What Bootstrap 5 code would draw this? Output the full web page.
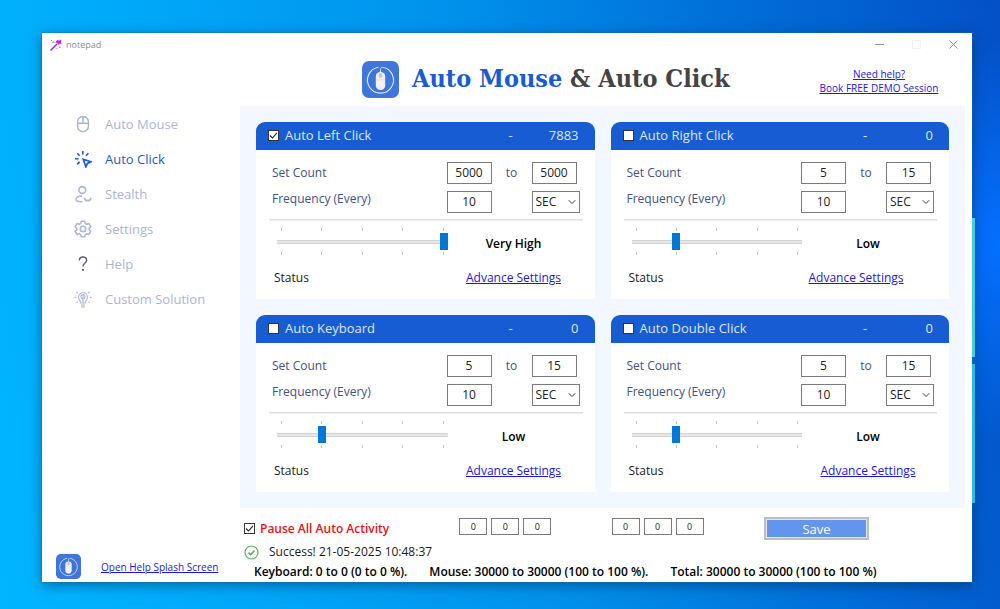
<!DOCTYPE html>
<html lang="en">
<head>
<meta charset="utf-8">
<meta name="viewport" content="width=device-width, initial-scale=1">
<title>Auto Mouse &amp; Auto Click</title>
<link href="https://cdn.jsdelivr.net/npm/bootstrap@5.3.0/dist/css/bootstrap.min.css" rel="stylesheet">
<style>
  :root { --brand: #175cd3; --panel: #f3f7ff; --muted-blue: #a9b5d9; --label: #41508a; --edge: #7a7a7a; }
  body {
    min-height: 100vh; padding: 33px 28px 27px 42px;
    font: 12px/20px "Open Sans", "Noto Sans", sans-serif; color: #1b1b1b;
    background:
      radial-gradient(140px 200px at 100% 40%, #0470ff 0, #0470ff00 100%),
      linear-gradient(80deg, #00b6ff 0%, #00a8fa 22%, #0092ec 50%, #006ed8 76%, #0450c6 100%);
  }
  a { color: #1d14f0; }
  .app-window { background: #fff; min-height: calc(100vh - 60px); box-shadow: 0 0 0 1px #1b6fae66, 0 3px 12px #00204080; }
  .desktop-glow { position: absolute; left: 100%; top: 185px; width: 3px; height: 285px; background: linear-gradient(#45cfd8 0 139px, #0a5fd0 139px 146px, #2fbbe0 146px); }

  .title-bar { height: 23px; padding: 0 12px 0 8px; font-size: 9px; color: #8b8b8b; }
  .title-bar button { width: 13px; height: 13px; padding: 0; border: 0; background: none; display: flex; }
  .brand-bar { display: grid; grid-template-columns: 1fr 186px; align-items: center; height: 50px; padding-left: 320px; }
  .brand-title { gap: 13px; padding-bottom: 4px; }
  .brand-bar h1 { font: bold 25px/30px "DejaVu Serif Condensed", "DejaVu Serif", serif; color: #444; margin: 0; }
  .brand-bar h1 span { color: var(--brand); }
  .help-links { font-size: 10px; line-height: 14px; }

  .side-nav { width: 198px; }
  .side-nav .nav-link { display: flex; align-items: center; gap: 13px; height: 35px; padding: 0 0 0 32px; font-size: 13px; color: var(--muted-blue); }
  .side-nav .nav-link.active { color: var(--brand); }
  .nav-link svg { width: 18px; height: 18px; flex: none; }
  .side-foot { font-size: 10px; padding: 0 0 3px 14px; gap: 20px; }

  .work-area { padding-right: 7px; }
  .panel-grid { background: var(--panel); padding: 16px; }
  .clicker { border: 0; border-radius: 9px 9px 0 0; background: #fff; font-size: 12px; color: #1b1b1b; }
  .clicker .card-header { display: grid; grid-template-columns: 1fr 22px 48px; align-items: center; height: 28px; padding: 0 16px 2px 12px; border: 0; border-radius: 9px 9px 0 0; background: var(--brand); color: #dce8ff; font-size: 13px; }
  .clicker .card-header label { gap: 6px; }
  .clicker .card-body { padding: 12px 15px 11px 16px; }
  .fields { display: grid; grid-template-columns: 1fr 45px 40px 48px; row-gap: 7px; align-items: center; color: var(--label); padding-bottom: 6px; }
  .fields .form-control, .fields .form-select { height: 22px; padding: 0 0 1px; border: 1px solid var(--edge); border-radius: 0; font-size: 12px; line-height: 16px; color: #222; text-align: center; }
  .fields .form-select { text-align: left; padding: 0 14px 1px 3px; background-size: 8px 8px; background-position: right 3px center; }
  .fields .end-field { width: 45px; }
  .raised { padding-bottom: 6px; line-height: 16px; }
  .rule { height: 2px; margin: 0 -3px; background: #ececec; border-top: 1px solid #e0e0e0; }
  .speed { padding: 7px 0 0 5px; }
  .speed-track { flex: 1; }
  .ticks { display: flex; justify-content: space-between; padding: 0 4px; }
  .ticks i { width: 1px; height: 3px; background: #c4c4c4; }
  .speed-state { width: 132px; padding-top: 5px; text-align: center; font-weight: 600; color: #000; }
  .speed-track input { appearance: none; -webkit-appearance: none; display: block; width: 100%; height: 17px; margin: 2px 0; background: linear-gradient(#e6e6e6, #e6e6e6) center / 100% 2px no-repeat, linear-gradient(#d3d3d3, #d3d3d3) center / 100% 4px no-repeat; }
  .speed-track input::-webkit-slider-thumb { -webkit-appearance: none; width: 8px; height: 17px; border: 0; border-radius: 0; background: #0078d7; }
  .speed-track input::-moz-range-thumb { width: 8px; height: 17px; border: 0; border-radius: 0; background: #0078d7; }
  .status-row { padding: 13px 0 0 2px; }
  .status-link { width: 132px; text-align: center; }

  .tick-box { appearance: none; -webkit-appearance: none; flex: none; width: 11px; height: 11px; margin: 0; border: 1px solid #333; background: #fff center / 9px 9px no-repeat; }
  .tick-box:checked { background-image: url("data:image/svg+xml,%3Csvg xmlns='http://www.w3.org/2000/svg' viewBox='0 0 9 9'%3E%3Cpath d='M1 4.5 3.4 7 8 1.8' fill='none' stroke='%23222' stroke-width='1.1'/%3E%3C/svg%3E"); }

  .bottom-bar { padding: 9px 96px 0 4px; }
  .bottom-bar .pause { gap: 5px; color: #f50f14; font-weight: 600; width: 155px; }
  .tiny-group { gap: 4px; margin-bottom: 4px; }
  .tiny-group input { width: 28px; height: 17px; padding: 0; border: 1px solid var(--edge); border-radius: 0; text-align: center; font-size: 9px; line-height: 12px; color: #222; }
  .btn-save { width: 105px; height: 23px; padding: 0; border: 2px solid #bdbdbd; outline: 1px solid #e4e4e4; outline-offset: -3px; border-radius: 0; background: #6495ed; color: #fff; font-size: 13px; line-height: 16px; }
  .btn-save:hover { background: #5586e0; color: #fff; }
  .message { gap: 10px; padding: 2px 0 0 4px; }
  .totals { font-weight: 600; color: #000; padding-left: 14px; gap: 22px; white-space: nowrap; }
</style>
</head>
<body>
<svg class="d-none" aria-hidden="true">
  <symbol id="logo" viewBox="0 0 37 37">
    <rect width="37" height="37" rx="7" fill="#3f76dc"/>
    <path d="M16.5 6.3A13 13 0 1 0 20.5 6.3" fill="none" stroke="#e4edff" stroke-width="1.1"/>
    <path d="M18.5 12V8.5c0-1.400 1-1.400 1-2.500" fill="none" stroke="#e4edff" stroke-width="1"/>
    <rect x="13.800" y="11" width="9.400" height="18" rx="4.600" fill="#f1f1f1"/>
    <path d="M14.500 18c3 1.200 5.500 1.200 8 0" fill="none" stroke="#ddd" stroke-width=".8"/>
    <rect x="16.800" y="12" width="3.400" height="5" rx="1.700" fill="#c4c4c4"/>
  </symbol>
</svg>

<main class="app-window position-relative d-flex flex-column">
  <div class="desktop-glow"></div>

  <div class="title-bar d-flex align-items-center">
    <svg width="12" height="12" viewBox="0 0 12 12" class="me-1" aria-hidden="true">
      <path d="M.5 11.500 7 5" stroke="#7a2cf0" stroke-width="1.400"/>
      <path d="M6 2.200 8 .8l.8 1L11.500.5l-.7 2.500.9 1.600-2.200.2L8 6 7.500 4 5.500 3.500z" fill="#c71df5"/>
      <path d="M2.500 2.500h2v1.500h-2zM9 7.500h1.500V9H9zM1 1h1v1H1zM6.500 9h1v1h-1z" fill="#d86cf5"/>
    </svg>
    <span class="me-auto">notepad</span>
    <div class="d-flex" style="gap:24px">
      <button type="button" aria-label="Minimize"><svg width="13" height="13" viewBox="0 0 13 13"><path d="M2 6.500h9" stroke="#999"/></svg></button>
      <button type="button" aria-label="Maximize" disabled><svg width="13" height="13" viewBox="0 0 13 13"><path d="M2.500 2.500h8v8h-8z" fill="none" stroke="#f0f0f0"/></svg></button>
      <button type="button" aria-label="Close"><svg width="13" height="13" viewBox="0 0 13 13"><path d="m2.500 2.500 8 8m0-8-8 8" stroke="#8f8f8f"/></svg></button>
    </div>
  </div>

  <header class="brand-bar">
    <div class="brand-title d-flex align-items-center">
      <svg width="37" height="37" aria-hidden="true"><use href="#logo"/></svg>
      <h1 class="text-nowrap"><span>Auto Mouse</span> &amp; Auto Click</h1>
    </div>
    <div class="help-links text-center">
      <a href="#help">Need help?</a><br>
      <a href="#demo">Book FREE DEMO Session</a>
    </div>
  </header>

  <div class="d-flex flex-grow-1">
    <aside class="side-nav d-flex flex-column flex-shrink-0">
      <nav class="nav flex-column flex-nowrap">
        <a class="nav-link" href="#mouse"><svg viewBox="0 0 18 18" fill="none" stroke="currentColor" stroke-width="1.500"><rect x="3.600" y="1.400" width="10.800" height="15.200" rx="5.200"/><path d="M3.600 8.200h10.800M9 1.400v6.800"/></svg>Auto Mouse</a>
        <a class="nav-link active" href="#click" aria-current="page"><svg viewBox="0 0 18 18" fill="none" stroke="currentColor" stroke-width="1.600"><path d="M8.800 1v3.600M3.200 3.200l2.500 2.500M1 8.800h3.600M3.200 14.400l2.500-2.500M14.400 3.200l-2.500 2.500"/><path d="m9.300 9.300 7.500 2.500-3.400 1.600-1.500 3.400z" stroke-width="1.700"/></svg>Auto Click</a>
        <a class="nav-link" href="#stealth"><svg viewBox="0 0 18 18" fill="none" stroke="currentColor" stroke-width="1.600"><circle cx="8.300" cy="5" r="3.400"/><path d="M8 11c-3.500 0-6 1.600-6 3.600 0 1.600 1.500 2.200 6.500 2.100M10.700 12.800v1.400c1 1.700 4.800 1.700 6 0v-1.400M12 14.800v1.700M15.300 14.800v1.700"/></svg>Stealth</a>
        <a class="nav-link" href="#settings"><svg viewBox="0 0 18 18" fill="none" stroke="currentColor" stroke-width="1.600" stroke-linejoin="round"><circle cx="9" cy="9" r="2.700"/><path d="M7.300 1.200h3.400l.6 2.200 1.400.8 2.200-.6 1.900 3-1.600 1.600v1.600l1.600 1.600-1.900 3-2.200-.6-1.400.8-.6 2.200H7.300l-.6-2.200-1.400-.8-2.200.6-1.900-3 1.600-1.600V8.200L1.200 6.600l1.900-3 2.200.6 1.400-.8z"/></svg>Settings</a>
        <a class="nav-link" href="#assist"><svg viewBox="0 0 18 18" fill="none" stroke="#5f5c86" stroke-width="1.500"><path d="M5.300 5.600c0-2.300 1.600-3.500 3.700-3.500s3.600 1.200 3.600 3.200c0 3-3.600 3-3.600 6.200"/><path d="M9 14v1.800" stroke-width="1.900"/></svg>Help</a>
        <a class="nav-link" href="#custom"><svg viewBox="0 0 18 18" fill="none" stroke="currentColor" stroke-width="1.100"><path d="M6.800 13c0-2.200-2.300-2.800-2.300-5.800a4.500 4.500 0 0 1 9 0c0 3-2.300 3.600-2.300 5.800zM7 15h4M7.500 16.900h3M.4 7.400h1.800M15.800 7.400h1.800M2.400 1.800l1.400 1.200M15.600 1.800l-1.400 1.200M2.400 12.600l1.400-1M15.600 12.600l-1.400-1"/><circle cx="9" cy="6.600" r="2" fill="#a9b5d966"/><path d="M9 8.600V13"/></svg>Custom Solution</a>
      </nav>
      <div class="side-foot d-flex align-items-center mt-auto">
        <svg width="25" height="25" class="flex-shrink-0" aria-hidden="true"><use href="#logo"/></svg>
        <a href="#splash" class="text-nowrap">Open Help Splash Screen</a>
      </div>
    </aside>

    <div class="work-area flex-grow-1">
      <div class="panel-grid">
        <div class="row row-cols-2 gx-3" style="row-gap:16px">

          <div class="col"><section class="card clicker">
            <div class="card-header">
              <label class="d-flex align-items-center"><input type="checkbox" class="tick-box" checked>Auto Left Click</label>
              <span>-</span><span class="text-end">7883</span>
            </div>
            <div class="card-body">
              <div class="fields">
                <label for="l-min">Set Count</label>
                <input id="l-min" class="form-control" value="5000">
                <label for="l-max" class="text-center">to</label>
                <input id="l-max" class="form-control end-field" value="5000">
                <label for="l-freq" class="raised">Frequency (Every)</label>
                <input id="l-freq" class="form-control" value="10">
                <span></span>
                <select class="form-select" aria-label="Left click unit"><option>SEC</option><option>MIN</option></select>
              </div>
              <div class="rule"></div>
              <div class="speed d-flex align-items-center">
                <div class="speed-track">
                  <div class="ticks"><i></i><i></i><i></i><i></i><i></i></div>
                  <input type="range" min="0" max="4" value="4" aria-label="Left click speed">
                  <div class="ticks"><i></i><i></i><i></i><i></i><i></i></div>
                </div>
                <div class="speed-state">Very High</div>
              </div>
              <div class="status-row d-flex justify-content-between">
                <span>Status</span><a href="#left" class="status-link">Advance Settings</a>
              </div>
            </div>
          </section></div>

          <div class="col"><section class="card clicker">
            <div class="card-header">
              <label class="d-flex align-items-center"><input type="checkbox" class="tick-box">Auto Right Click</label>
              <span>-</span><span class="text-end">0</span>
            </div>
            <div class="card-body">
              <div class="fields">
                <label for="r-min">Set Count</label>
                <input id="r-min" class="form-control" value="5">
                <label for="r-max" class="text-center">to</label>
                <input id="r-max" class="form-control end-field" value="15">
                <label for="r-freq" class="raised">Frequency (Every)</label>
                <input id="r-freq" class="form-control" value="10">
                <span></span>
                <select class="form-select" aria-label="Right click unit"><option>SEC</option><option>MIN</option></select>
              </div>
              <div class="rule"></div>
              <div class="speed d-flex align-items-center">
                <div class="speed-track">
                  <div class="ticks"><i></i><i></i><i></i><i></i><i></i></div>
                  <input type="range" min="0" max="4" value="1" aria-label="Right click speed">
                  <div class="ticks"><i></i><i></i><i></i><i></i><i></i></div>
                </div>
                <div class="speed-state">Low</div>
              </div>
              <div class="status-row d-flex justify-content-between">
                <span>Status</span><a href="#right" class="status-link pe-4">Advance Settings</a>
              </div>
            </div>
          </section></div>

          <div class="col"><section class="card clicker">
            <div class="card-header">
              <label class="d-flex align-items-center"><input type="checkbox" class="tick-box">Auto Keyboard</label>
              <span>-</span><span class="text-end">0</span>
            </div>
            <div class="card-body">
              <div class="fields">
                <label for="k-min">Set Count</label>
                <input id="k-min" class="form-control" value="5">
                <label for="k-max" class="text-center">to</label>
                <input id="k-max" class="form-control end-field" value="15">
                <label for="k-freq" class="raised">Frequency (Every)</label>
                <input id="k-freq" class="form-control" value="10">
                <span></span>
                <select class="form-select" aria-label="Keyboard unit"><option>SEC</option><option>MIN</option></select>
              </div>
              <div class="rule"></div>
              <div class="speed d-flex align-items-center">
                <div class="speed-track">
                  <div class="ticks"><i></i><i></i><i></i><i></i><i></i></div>
                  <input type="range" min="0" max="4" value="1" aria-label="Keyboard speed">
                  <div class="ticks"><i></i><i></i><i></i><i></i><i></i></div>
                </div>
                <div class="speed-state">Low</div>
              </div>
              <div class="status-row d-flex justify-content-between">
                <span>Status</span><a href="#keyboard" class="status-link">Advance Settings</a>
              </div>
            </div>
          </section></div>

          <div class="col"><section class="card clicker">
            <div class="card-header">
              <label class="d-flex align-items-center"><input type="checkbox" class="tick-box">Auto Double Click</label>
              <span>-</span><span class="text-end">0</span>
            </div>
            <div class="card-body">
              <div class="fields">
                <label for="d-min">Set Count</label>
                <input id="d-min" class="form-control" value="5">
                <label for="d-max" class="text-center">to</label>
                <input id="d-max" class="form-control end-field" value="15">
                <label for="d-freq" class="raised">Frequency (Every)</label>
                <input id="d-freq" class="form-control" value="10">
                <span></span>
                <select class="form-select" aria-label="Double click unit"><option>SEC</option><option>MIN</option></select>
              </div>
              <div class="rule"></div>
              <div class="speed d-flex align-items-center">
                <div class="speed-track">
                  <div class="ticks"><i></i><i></i><i></i><i></i><i></i></div>
                  <input type="range" min="0" max="4" value="1" aria-label="Double click speed">
                  <div class="ticks"><i></i><i></i><i></i><i></i><i></i></div>
                </div>
                <div class="speed-state">Low</div>
              </div>
              <div class="status-row d-flex justify-content-between">
                <span>Status</span><a href="#double" class="status-link">Advance Settings</a>
              </div>
            </div>
          </section></div>

        </div>
      </div>

      <footer>
        <div class="bottom-bar d-flex align-items-center justify-content-between">
          <label class="pause d-flex align-items-center"><input type="checkbox" class="tick-box" checked>Pause All Auto Activity</label>
          <div class="tiny-group d-flex">
            <input value="0" aria-label="Start hours"><input value="0" aria-label="Start minutes"><input value="0" aria-label="Start seconds">
          </div>
          <div class="tiny-group d-flex">
            <input value="0" aria-label="Stop hours"><input value="0" aria-label="Stop minutes"><input value="0" aria-label="Stop seconds">
          </div>
          <button type="button" class="btn btn-save">Save</button>
        </div>
        <div class="message d-flex align-items-center">
          <svg width="15" height="15" viewBox="0 0 15 15" fill="none" stroke="#5cb860" aria-hidden="true"><circle cx="7.500" cy="7.500" r="6.500" stroke-width="1.200"/><path d="m4.500 7.500 2.200 2.200 3.800-4" stroke-width="1.700"/></svg>
          <span>Success! 21-05-2025 10:48:37</span>
        </div>
        <div class="totals d-flex">
          <span>Keyboard: 0 to 0 (0 to 0 %).</span>
          <span>Mouse: 30000 to 30000 (100 to 100 %).</span>
          <span>Total: 30000 to 30000 (100 to 100 %)</span>
        </div>
      </footer>
    </div>
  </div>
</main>
<script src="https://cdn.jsdelivr.net/npm/bootstrap@5.3.0/dist/js/bootstrap.bundle.min.js"></script>
</body>
</html>
